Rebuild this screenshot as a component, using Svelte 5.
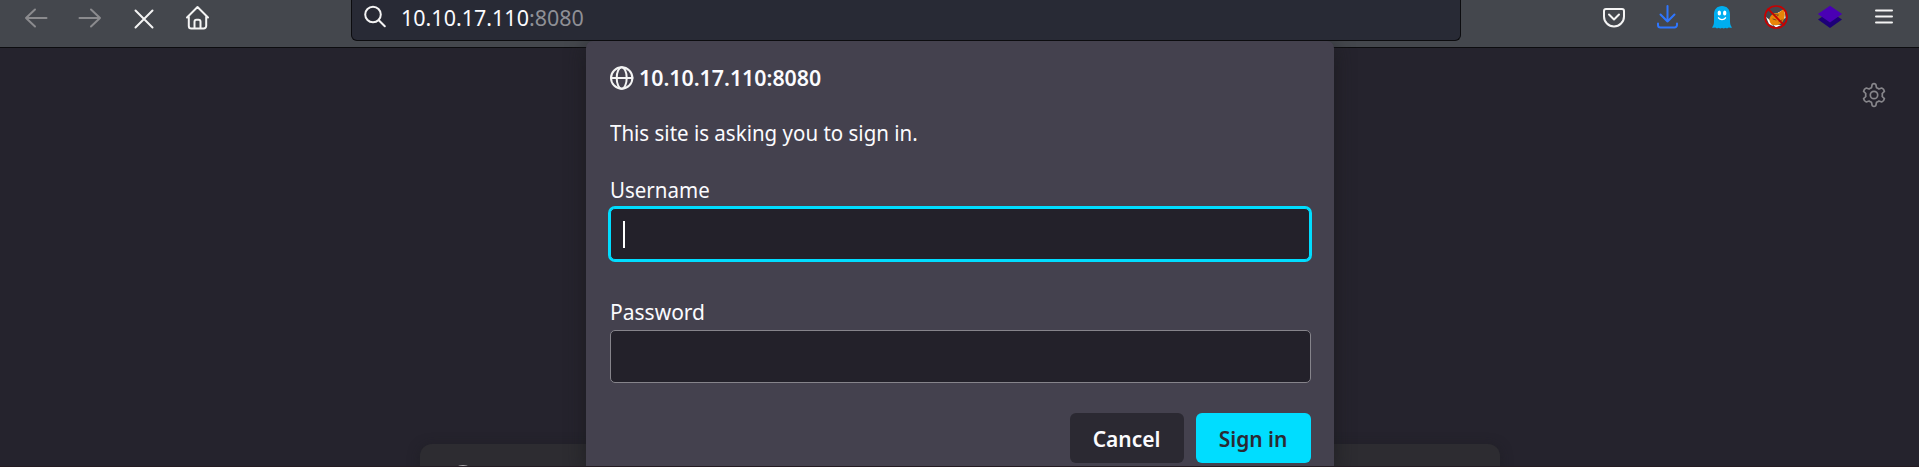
<script>
  let username = $state('');
  let password = $state('');
</script>

<div class="browser">
  <header class="toolbar">
    <nav class="nav">
      <svg class="dim" viewBox="0 0 24 24"><path d="M22.500 12H2M11 3.500L2 12l9 8.500" /></svg>
      <svg class="dim" viewBox="0 0 24 24"><path d="M1.500 12H22M13 3.500l9 8.500-9 8.500" /></svg>
      <svg viewBox="0 0 24 24"><path d="M3.500 4.500l17 17M20.500 4.500l-17 17" /></svg>
      <svg viewBox="0 0 24 24"><path d="M1 11.500L11.500 1 22 11.500M2.800 10.500V20a2.500 2.500 0 0 0 2.500 2.500h12.400a2.500 2.500 0 0 0 2.500-2.500v-9.500M8.500 22v-6.200a2 2 0 0 1 2-2h2a2 2 0 0 1 2 2V22" /></svg>
    </nav>
    <div class="address">
      <svg viewBox="0 0 24 24"><circle cx="9" cy="9.500" r="7.800" /><path d="M14.800 15.300l6 6" /></svg>
      <span class="url">10.10.17.110<span class="port">:8080</span></span>
    </div>
    <div class="tools">
      <svg viewBox="0 0 24 24"><path d="M4 4h16a2 2 0 0 1 2 2v5.500a10 10 0 0 1-20 0V6a2 2 0 0 1 2-2zM7 9.500l5 5 5-5" /></svg>
      <svg class="download" viewBox="0 0 24 24"><path d="M11.500 1v15.500M4.500 9.500l7 7 7-7M2 18.500V20a2.500 2.500 0 0 0 2.500 2.500h14a2.500 2.500 0 0 0 2.500-2.500v-1.500" /></svg>
      <svg viewBox="0 0 24 24">
        <path class="ghost" d="M12 1C7 1 4 4.500 4 9.500v7c0 2.500-.7 4.500-2 6 .9.500 2.300.4 3.200-.2.500 1 2.200 1.600 3.500.4 1 1.100 2.600 1.100 3.300 0 .8 1.100 2.400 1.100 3.300 0 1.300 1.200 3 .6 3.500-.4.900.6 2.300.7 3.200.2-1.300-1.500-2-3.500-2-6v-7C20 4.500 17 1 12 1z" />
        <ellipse class="white" cx="9.300" cy="8" rx="1.700" ry="2.500" /><ellipse class="white" cx="14.700" cy="8" rx="1.700" ry="2.500" />
        <path class="smile" d="M8.500 12.800c1.500 2.400 5.500 2.400 7 0" />
      </svg>
      <svg viewBox="0 0 24 24">
        <path class="white" d="M20.500 4l1 9-4 2-4-7zM2 12l5 4 2 5-4-2zM8 19l9 1-5 2.500z" />
        <path class="fox" d="M5.500 13.500c1.500-4 5-5.800 8.500-5.300L20 4c1 4 1.500 8-1 12-2.500 4.500-8.500 5-11.500 3.500-1.500-1.500-2.500-4-2-6z" />
        <path class="fur" d="M10 9.500l4.500.5-2 1.500M9 14l3 1M15 16.500l3-1.500" />
        <circle class="ban" cx="12" cy="12" r="11" /><path class="ban" d="M4.200 4.200l15.600 15.600" />
      </svg>
      <svg viewBox="0 0 24 24"><path class="layer-low" d="M12 6.500L24 14.500 12 23 0 14.500z" /><path class="layer-top" d="M12 .7L24.200 9 12 17.500-.2 9z" /></svg>
      <svg viewBox="0 0 24 24"><path d="M4 5.500h16M4 11.500h16M4 17.500h16" /></svg>
    </div>
  </header>

  <main class="page">
    <svg class="gear" viewBox="0 0 24 24"><path d="M10.200 1.300Q12 -.2 13.800 1.300L14.500 4.700Q15.800 5.200 16.900 6L19.700 5Q22 6 22.400 8.400L20.200 10.500Q20.500 12 20.200 13.500L22.400 15.600Q22 18 19.700 19L16.900 18Q15.800 18.800 14.500 19.300L13.800 22.700Q12 24.200 10.200 22.700L9.500 19.300Q8.200 18.800 7.100 18L4.300 19Q2 18 1.600 15.600L3.800 13.500Q3.500 12 3.800 10.500L1.600 8.400Q2 6 4.300 5L7.100 6Q8.200 5.200 9.500 4.700z" /><circle cx="12" cy="12" r="3.700" /></svg>
    <div class="search"><span class="logo"></span></div>
  </main>

  <form class="dialog">
    <h1>
      <svg viewBox="0 0 24 24"><circle cx="11.700" cy="12" r="10.700" /><ellipse cx="11.700" cy="12" rx="5" ry="10.700" /><path d="M1.500 12h21" /></svg>
      <span class="host">10.10.17.110:8080</span>
    </h1>
    <p><span class="narrow">This site is asking you to sign in.</span></p>
    <label for="user"><span class="narrow">Username</span></label>
    <div class="field active"><i class="caret"></i><input id="user" bind:value={username} /></div>
    <label for="pass" class="second"><span class="pass">Password</span></label>
    <div class="field"><input id="pass" type="password" bind:value={password} /></div>
    <div class="actions">
      <button type="button"><span>Cancel</span></button>
      <button type="button" class="primary"><span>Sign in</span></button>
    </div>
  </form>
</div>

<style>
  :global(body) { margin: 0; overflow: hidden; background: #25232d; }
  * { box-sizing: border-box; }
  .browser {
    position: relative; width: 1919px; height: 467px; overflow: hidden;
    display: flex; flex-direction: column;
    font-family: "Noto Sans", sans-serif; color: #fbfbfe; background: #25232d;
  }
  .browser::after { content: ""; position: absolute; inset: auto 0 0; height: 1px; background: #241b22; }
  svg { display: block; flex: none; width: 24px; height: 24px; fill: none; stroke: #f4f4f4; stroke-width: 2; stroke-linecap: round; stroke-linejoin: round; overflow: visible; }
  .toolbar { height: 48px; flex: none; display: flex; align-items: flex-start; background: #44474d; border-bottom: 1px solid #0c0c0f; }
  .nav { width: 351px; padding: 6px 0 0 24px; display: flex; gap: 30px; }
  .dim { stroke: #8b8b8e; }
  .address {
    width: 1110px; height: 41px; padding: 5px 0 0 12px; display: flex; align-items: flex-start; gap: 13px;
    background: #282a35; border: 1px solid #0c0c0f; border-top: 0; border-radius: 0 0 6px 6px;
  }
  .url { font-size: 22px; line-height: 30px; margin-top: -3px; white-space: nowrap; transform: scaleX(.977); transform-origin: left; }
  .port { color: #8f9096; }
  .tools { margin-left: auto; padding: 5px 23px 0 0; display: flex; gap: 30px; }
  .download { stroke: #2e76ff; }
  .ghost { fill: #00aef0; stroke: none; }
  .white { fill: #fff; stroke: none; }
  .smile { stroke: #fff; stroke-width: 1.4; }
  .fox { fill: #e98508; stroke: none; }
  .fur { stroke: #79501c; stroke-width: 1; }
  .ban { stroke: #c80000; stroke-width: 1.700; }
  .layer-low { fill: #1d0078; stroke: none; }
  .layer-top { fill: #4a00b4; stroke: none; }
  .page { flex: 1; display: flex; flex-direction: column; justify-content: space-between; }
  .gear { align-self: flex-end; margin: 35px 33px 0 0; stroke: #87868b; stroke-width: 1.700; }
  .search { align-self: center; width: 1080px; height: 23px; padding: 21px 0 0 30px; border-radius: 12px 12px 0 0; background: #2d2c31; box-shadow: 0 2px 12px #1d1c2299; }
  .logo { display: block; width: 26px; height: 26px; border-radius: 50%; background: #aaa8ab; }
  .dialog {
    position: absolute; left: 586px; top: 41px; width: 748px; height: 426px; padding: 21px 23px 0 24px;
    display: flex; flex-direction: column; background: #44414e; border-radius: 7px 7px 0 0; box-shadow: 0 4px 20px #1b1b1ecc;
    clip-path: inset(0 -30px 0 -30px);
  }
  h1 { margin: 0; height: 32px; display: flex; align-items: center; gap: 5px; font-size: 22px; font-weight: 600; line-height: 32px; }
  .host, p span, label span { display: inline-block; white-space: nowrap; transform-origin: left; }
  .host { transform: translateY(-1px) scaleX(.97); }
  .narrow { transform: scaleX(.932); }
  .pass { transform: scaleX(.955); }
  p { margin: 22px 0 0; height: 32px; font-size: 22px; line-height: 32px; }
  label { margin-top: 26px; height: 33px; font-size: 22px; line-height: 30px; }
  .field { height: 53px; flex: none; padding: 0 12px; margin-top: 1px; display: flex; align-items: center; background: #23212a; border: 1px solid #86848b; border-radius: 5px; }
  .active { height: 52px; margin-right: 1px; border-color: #00ddff; box-shadow: 0 0 0 2px #00ddff; }
  .caret { width: 2px; height: 27px; background: #fff; }
  input { flex: 1; border: 0; outline: 0; padding: 0; background: transparent; color: inherit; font: inherit; }
  label.second { margin-top: 36px; }
  .actions { margin-top: 30px; display: flex; justify-content: flex-end; gap: 12px; }
  button { width: 114px; height: 50px; padding: 0; border: 0; border-radius: 6px; color: #fbfbfe; background: #2b2932; font: 600 22px/50px "Noto Sans", sans-serif; }
  button span { display: inline-block; transform: scaleX(.953); }
  .primary { width: 115px; background: #00ddff; color: #2b2a33; }
</style>
